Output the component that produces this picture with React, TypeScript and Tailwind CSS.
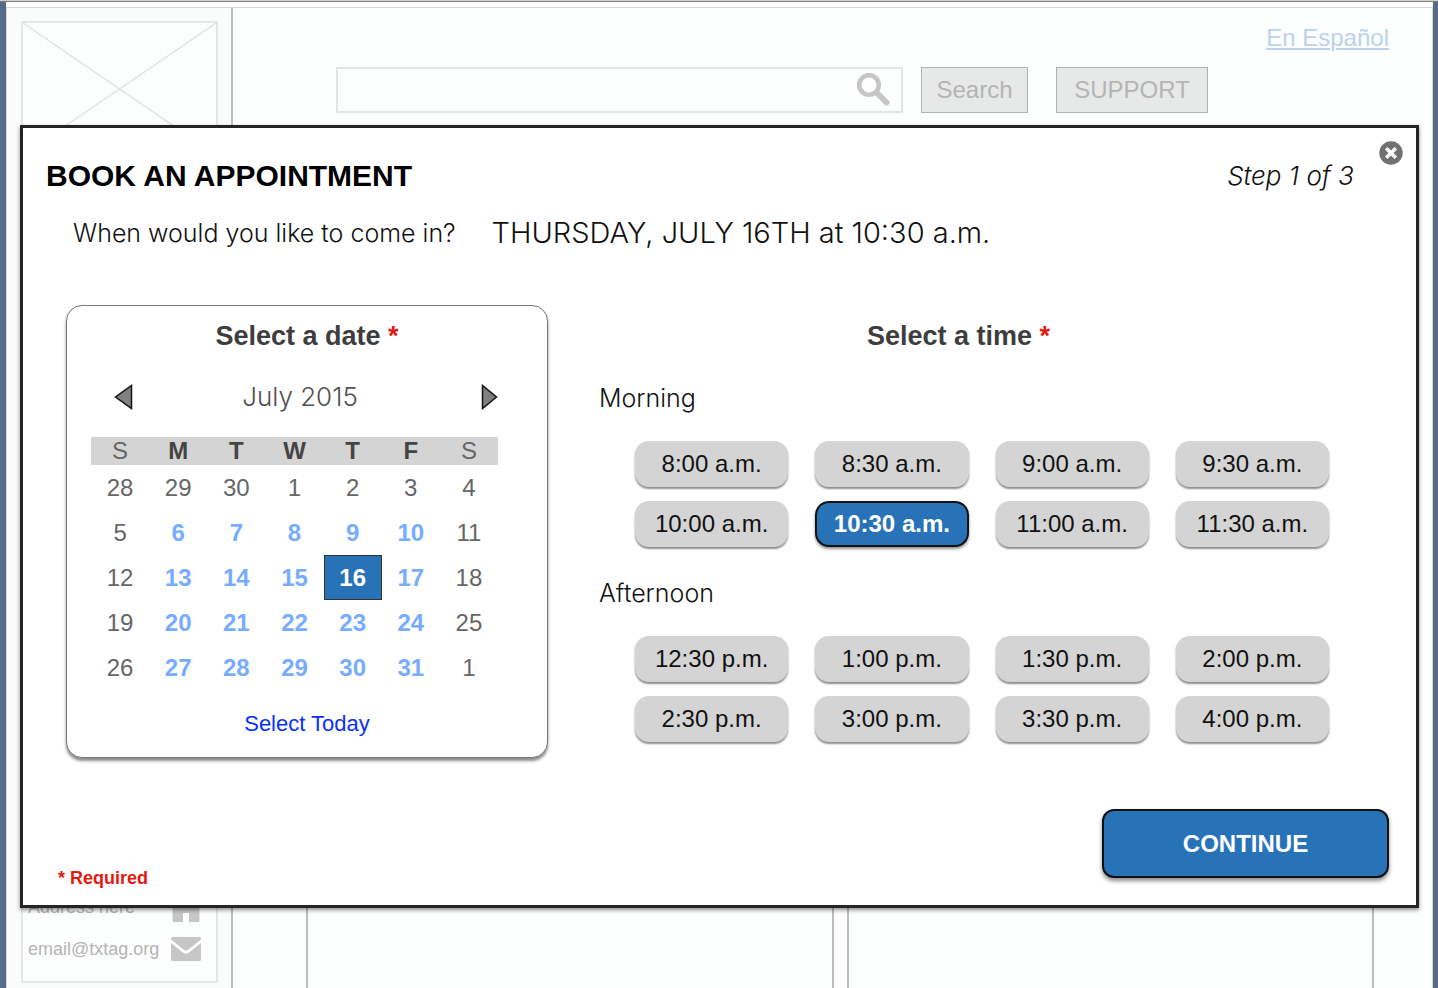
import { useState } from "react";

const WEEKDAYS = [
  { short: "S", name: "Sunday" },
  { short: "M", name: "Monday" },
  { short: "T", name: "Tuesday" },
  { short: "W", name: "Wednesday" },
  { short: "T", name: "Thursday" },
  { short: "F", name: "Friday" },
  { short: "S", name: "Saturday" },
];

const WEEKS = [
  [28, 29, 30, 1, 2, 3, 4],
  [5, 6, 7, 8, 9, 10, 11],
  [12, 13, 14, 15, 16, 17, 18],
  [19, 20, 21, 22, 23, 24, 25],
  [26, 27, 28, 29, 30, 31, 1],
];

const MORNING = ["8:00 a.m.", "8:30 a.m.", "9:00 a.m.", "9:30 a.m.", "10:00 a.m.", "10:30 a.m.", "11:00 a.m.", "11:30 a.m."];
const AFTERNOON = ["12:30 p.m.", "1:00 p.m.", "1:30 p.m.", "2:00 p.m.", "2:30 p.m.", "3:00 p.m.", "3:30 p.m.", "4:00 p.m."];

const LIGHT = "font-['Inter','Liberation_Sans',sans-serif] font-light";

function SearchIcon() {
  return (
    <svg viewBox="0 0 34 34" className="size-[34px]" fill="none" stroke="#c6c6c6" aria-hidden="true">
      <circle cx="12" cy="12" r="9.800" strokeWidth="4.600" />
      <path d="M20.500 20.500L29.500 29.500" strokeWidth="6" strokeLinecap="round" />
    </svg>
  );
}

function CloseIcon() {
  return (
    <svg viewBox="0 0 24 24" className="size-6" aria-hidden="true">
      <circle cx="12" cy="12" r="11.700" fill="#717171" />
      <path d="M8.500 8.500L15.500 15.500M15.500 8.500L8.500 15.500" stroke="#fff" strokeWidth="3.600" strokeLinecap="square" />
    </svg>
  );
}

function HouseIcon() {
  return (
    <svg viewBox="0 0 30 32" className="h-8 w-[30px]" fill="#c6c6c6" aria-hidden="true">
      <path d="M15 3L0 17h1.500v12.500c0 .8.700 1.500 1.500 1.500H12v-9h6v9h9c.8 0 1.500-.700 1.500-1.500V17H30z" />
    </svg>
  );
}

function MailIcon() {
  return (
    <svg viewBox="0 0 30 24" className="h-6 w-[30px]" fill="#c6c6c6" aria-hidden="true">
      <path d="M1.500 0h27Q30 0 30 1.500v1L17.500 12.500q-2.500 2-5 0L0 2.500v-1Q0 0 1.500 0z" />
      <path d="M0 6l11.500 9.300q3.500 2.700 7 0L30 6v16.500q0 1.500-1.500 1.500h-27Q0 24 0 22.500z" />
    </svg>
  );
}

function Sidebar() {
  return (
    <aside className="flex w-[226px] shrink-0 flex-col border-r-2 border-[#bcbcbc] bg-[#fafcfb] pt-[13px] pr-[13px] pb-[5px] pl-[14px]">
      <div className="flex grow flex-col border-2 border-[#e5e7e6] bg-[#fdfefe]">
        <svg viewBox="0 0 194 132" className="h-[132px] w-full" preserveAspectRatio="none" stroke="#e3e5e4" strokeWidth="1.500" aria-hidden="true">
          <path d="M0 0L194 132M194 0L0 132" />
        </svg>
        <address className="mt-auto flex flex-col gap-3 pr-[15px] pb-[18px] pl-[5px] text-lg leading-[28px] text-[#b4b4b4] not-italic">
          <div className="flex items-center justify-between">
            <span>Address here</span>
            <HouseIcon />
          </div>
          <div className="flex items-center justify-between">
            <a href="mailto:email@txtag.org">email@txtag.org</a>
            <MailIcon />
          </div>
        </address>
      </div>
    </aside>
  );
}

function PageHeader() {
  return (
    <header>
      <div className="flex justify-end pt-[14px] pr-[43px]">
        <a href="#es" className="text-2xl leading-8 text-[#b9d3ec] underline decoration-2 underline-offset-2">
          En Español
        </a>
      </div>
      <div className="flex pt-[13px] pr-[224px] pl-[103px]">
        <div className="flex h-[46px] min-w-0 flex-1 items-center border-2 border-[#e3e5e4] bg-[#fdfefe] pr-[10px]">
          <input
            type="search"
            aria-label="Search the site"
            className="h-full min-w-0 flex-1 bg-transparent px-3 text-2xl text-[#b4b4b4] outline-none"
          />
          <SearchIcon />
        </div>
        <button type="button" className="ml-[18px] h-[46px] w-[107px] border border-[#b0b2b1] bg-[#e7e9e8] text-2xl text-[#b4b4b4]">
          Search
        </button>
        <button type="button" className="ml-[28px] h-[46px] w-[152px] border border-[#b0b2b1] bg-[#e7e9e8] text-2xl text-[#b4b4b4]">
          SUPPORT
        </button>
      </div>
    </header>
  );
}

function Calendar({ day, onSelect }: { day: number; onSelect: (day: number) => void }) {
  return (
    <section className="w-[482px] shrink-0 rounded-2xl border border-[#777] bg-white pt-[14px] pb-[19px] text-center shadow-[0_3px_3px_rgba(0,0,0,0.45)]">
      <h2 className="text-[27px] leading-8 font-bold text-[#3d3d3d]">
        Select a date <span className="text-[#e2190f]">*</span>
      </h2>
      <div className="mt-[29px] flex items-center justify-between pr-[49px] pl-[47px]">
        <button type="button" aria-label="Previous month">
          <svg viewBox="0 0 19 26" className="h-[26px] w-[19px]" fill="#808080" stroke="#111" strokeWidth="1.500" aria-hidden="true">
            <path d="M17.500 1.500v23L1.500 13z" />
          </svg>
        </button>
        <span className={`pr-[14px] text-[26px] leading-8 text-[#505050] ${LIGHT}`}>July 2015</span>
        <button type="button" aria-label="Next month">
          <svg viewBox="0 0 17 26" className="h-[26px] w-[17px]" fill="#808080" stroke="#111" strokeWidth="1.500" aria-hidden="true">
            <path d="M1.500 1.500v23L15.500 13z" />
          </svg>
        </button>
      </div>
      <div className="mt-6 pr-[49px] pl-6">
        <table className="w-full table-fixed border-collapse text-2xl text-[#666]">
          <thead>
            <tr className="h-7 bg-[#d4d4d4] leading-7">
              {WEEKDAYS.map((d, i) => (
                <th key={i} scope="col" abbr={d.name} className={i === 0 || i === 6 ? "p-0 font-normal" : "p-0 font-bold text-[#444]"}>
                  {d.short}
                </th>
              ))}
            </tr>
          </thead>
          <tbody>
            {WEEKS.map((week, w) => (
              <tr key={w} className="h-[45px]">
                {week.map((d, i) => {
                  const open = w > 0 && i > 0 && i < 6;
                  return (
                    <td key={i} className="p-0">
                      {open ? (
                        <button
                          type="button"
                          aria-pressed={d === day}
                          onClick={() => onSelect(d)}
                          className={
                            d === day
                              ? "block h-[45px] w-full border border-[#333] bg-[#2873b8] font-bold text-white"
                              : "block h-[45px] w-full font-bold text-[#77acff]"
                          }
                        >
                          {d}
                        </button>
                      ) : (
                        d
                      )}
                    </td>
                  );
                })}
              </tr>
            ))}
          </tbody>
        </table>
      </div>
      <button type="button" onClick={() => onSelect(16)} className="mt-5 text-[22px] leading-7 text-[#0a32ff]">
        Select Today
      </button>
    </section>
  );
}

function SlotGroup({ title, slots, time, onSelect }: { title: string; slots: string[]; time: string; onSelect: (t: string) => void }) {
  return (
    <div className="mt-[30px]">
      <h3 className={`pl-[11px] text-[25px] leading-8 text-[#111] ${LIGHT}`}>{title}</h3>
      <div className="mt-[27px] grid grid-cols-4 gap-x-[27px] gap-y-[14px] pl-[47px]">
        {slots.map((s) => (
          <button
            key={s}
            type="button"
            aria-pressed={s === time}
            onClick={() => onSelect(s)}
            className={
              s === time
                ? "h-[46px] rounded-[14px] border-2 border-[#111] bg-[#2873b8] text-2xl font-bold text-white shadow-[0_2px_3px_rgba(0,0,0,0.45)]"
                : "h-[46px] rounded-[14px] bg-[#d4d4d4] text-2xl text-[#111] shadow-[0_2px_2px_rgba(0,0,0,0.45)]"
            }
          >
            {s}
          </button>
        ))}
      </div>
    </div>
  );
}

function BookingDialog() {
  const [day, setDay] = useState(16);
  const [time, setTime] = useState("10:30 a.m.");
  const dayOfWeek = WEEKDAYS[(day + 2) % 7].name.toUpperCase();

  return (
    <div
      role="dialog"
      aria-labelledby="booking-title"
      className="absolute right-[19px] left-5 top-[124px] border-[3px] border-[#242424] bg-white pt-[30px] pb-[27px] shadow-[0_2px_4px_rgba(0,0,0,0.45)]"
    >
      <button type="button" aria-label="Close" className="absolute top-[13px] right-[13px]">
        <CloseIcon />
      </button>
      <div className="flex items-center justify-between pr-[62px] pl-[23px]">
        <h1 id="booking-title" className="text-3xl leading-9 font-bold text-black">
          BOOK AN APPOINTMENT
        </h1>
        <p className={`text-[26px] leading-9 text-[#111] italic ${LIGHT}`}>Step 1 of 3</p>
      </div>
      <div className={`mt-[21px] flex items-center gap-9 pl-[50px] leading-9 text-[#111] ${LIGHT}`}>
        <p className="text-[25px]">When would you like to come in?</p>
        <p className="text-[29px]">
          {dayOfWeek}, JULY {day}TH at {time}
        </p>
      </div>
      <div className="mt-[54px] flex gap-10 pr-[87px] pl-[43px]">
        <Calendar day={day} onSelect={setDay} />
        <section className="min-w-0 flex-1 pt-[15px]">
          <h2 className="text-center text-[27px] leading-8 font-bold text-[#3d3d3d]">
            Select a time <span className="text-[#e2190f]">*</span>
          </h2>
          <SlotGroup title="Morning" slots={MORNING} time={time} onSelect={setTime} />
          <SlotGroup title="Afternoon" slots={AFTERNOON} time={time} onSelect={setTime} />
        </section>
      </div>
      <div className="mt-[51px] flex items-end justify-between pr-[27px] pl-[35px]">
        <p className="-mb-3 text-lg leading-6 font-bold text-[#e2190f]">* Required</p>
        <button
          type="button"
          className="h-[69px] w-[287px] rounded-xl border-2 border-[#111] bg-[#2873b8] text-2xl font-bold text-white shadow-[0_3px_4px_rgba(0,0,0,0.45)]"
        >
          CONTINUE
        </button>
      </div>
    </div>
  );
}

export default function App() {
  return (
    <div className="relative flex min-h-screen flex-col border-t border-[#d0d0cc] bg-[#566a8c] font-['Liberation_Sans',Arial,sans-serif]">
      <div className="flex grow flex-col border-t border-[#7d7d7d] pr-[5px] pl-[6px]">
        <div className="flex grow flex-col bg-white pt-[5px]">
          <div className="flex grow border border-b-0 border-[#d6d8d5] bg-[#fdfefe]">
            <Sidebar />
            <main className="flex min-w-0 flex-1 flex-col">
              <PageHeader />
              <div className="mt-10 flex grow gap-[13px] pr-[58px] pl-[73px]">
                <div className="flex-1 border-2 border-b-0 border-[#bcbcbc]" />
                <div className="flex-1 border-2 border-b-0 border-[#bcbcbc]" />
              </div>
            </main>
          </div>
        </div>
      </div>
      <BookingDialog />
    </div>
  );
}
